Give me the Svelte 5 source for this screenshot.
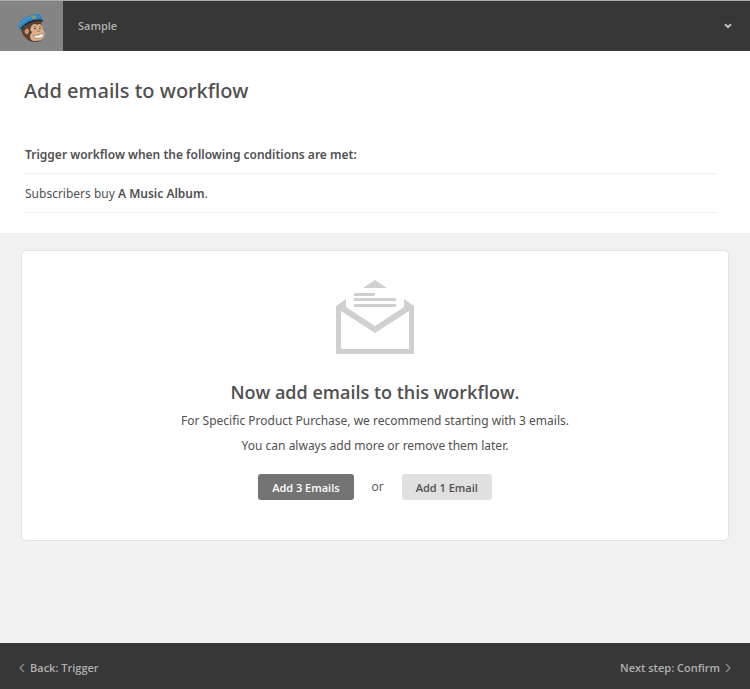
<script lang="ts">
  let { account = 'Sample', product = 'A Music Album', recommended = 3 } = $props();
</script>

<div class="page">
  <header class="topbar">
    <a class="logo" href="#home" aria-label="Home">
      <svg width="28" height="30" viewBox="0 0 28 30" aria-hidden="true">
        <path d="M3 15C3 19 5 23 8 25c2 3 6 4 9 4 5 0 8-2 8-7 1-2 0-5-1-7l-1-7-10-1z" fill="#59402f" />
        <path d="M13 14c1-3 4-4 6-2 2-2 4-1 5 1l1 4c2 2 2 4 1 7-2 3-5 4-9 4-3 0-5-2-5-5 0-2 2-3 2-4-2-1-2-3-1-5z" fill="#dcae8b" />
        <path d="M8 16c2-1 3 0 3 2s-1 4-3 3-2-4 0-5z" fill="#cb9472" />
        <path d="M15 22c4 1 7 0 10-2 1 3-1 5-4 5-3 1-5-1-6-3z" fill="#fff" stroke="#8b634b" stroke-width="0.600" />
        <path d="M16 14c0-1 1-1 2 0M21 14c1-1 2-1 2 0" stroke="#80533e" stroke-width="0.700" fill="none" />
        <circle cx="17" cy="15.500" r="0.800" fill="#382820" />
        <circle cx="22" cy="15.500" r="0.700" fill="#382820" />
        <path d="M19 18h3" stroke="#8b5d45" stroke-width="0.800" />
        <path d="M1 16C0 13 1 9 5 6c4-3 10-5 16-5 2 1 3 3 4 6-8 0-15 2-22 10z" fill="#2f86c2" />
        <path d="M2 12C5 7 11 4 18 3" stroke="#4999cb" stroke-width="1.500" fill="none" />
        <path d="M3 16C8 9 14 7 23 7M13 9c4-2 8-2 12-1" stroke="#20292f" stroke-width="1.500" fill="none" />
        <path d="M14 3l2-1 2 2-1 2-2 0z" fill="#a9944f" />
      </svg>
    </a>
    <span class="account">{account}</span>
    <button class="menu" aria-label="Open account menu">
      <svg width="8" height="6" viewBox="0 0 8 6" aria-hidden="true">
        <path d="M1 1.200l3 3 3-3" fill="none" stroke="currentColor" stroke-width="2" />
      </svg>
    </button>
  </header>

  <section class="intro">
    <h1>Add emails to workflow</h1>
    <div class="conditions">
      <h2>Trigger workflow when the following conditions are met:</h2>
      <p>Subscribers buy <strong>{product}</strong>.</p>
    </div>
  </section>

  <main>
    <div class="card">
      <svg class="envelope" width="80" height="74" viewBox="0 0 80 74" aria-hidden="true">
        <g fill="#d0d0d0">
          <path d="M28 8L40 0l12 8z" />
          <path d="M19 13h21v3H19zM19 18h42v3H19zM19 24h42v3H19z" />
          <path fill-rule="evenodd" d="M1 26l10-7v8l29 19 29-19v-8l10 7v48H1zM6 31v38h68V31L40 53z" />
        </g>
      </svg>
      <h3>Now add emails to this workflow.</h3>
      <p>For Specific Product Purchase, we recommend starting with {recommended} emails.</p>
      <p>You can always add more or remove them later.</p>
      <div class="actions">
        <button class="primary">Add {recommended} Emails</button>
        <span>or</span>
        <button class="secondary">Add 1 Email</button>
      </div>
    </div>
  </main>

  <footer>
    <a href="#trigger">
      <svg width="6" height="10" viewBox="0 0 6 10" aria-hidden="true">
        <path d="M5 1L1 5l4 4" fill="none" stroke="currentColor" stroke-width="1.500" />
      </svg>
      Back: Trigger
    </a>
    <a href="#confirm">
      Next step: Confirm
      <svg width="6" height="10" viewBox="0 0 6 10" aria-hidden="true">
        <path d="M1 1l4 4-4 4" fill="none" stroke="currentColor" stroke-width="1.500" />
      </svg>
    </a>
  </footer>
</div>

<style>
  .page {
    display: flex;
    flex-direction: column;
    min-height: 100vh;
    background: #f1f1f1;
    color: #505050;
    font-family: "Open Sans", sans-serif;
    font-size: 12px;
    line-height: 24px;
  }

  h1,
  h2,
  h3,
  p {
    margin: 0;
  }

  button {
    border: 0;
    font-family: inherit;
    cursor: pointer;
  }

  a {
    color: inherit;
    text-decoration: none;
  }

  .topbar {
    display: flex;
    align-items: center;
    box-sizing: border-box;
    height: 51px;
    border-top: 1px solid #a9aeab;
    background: #373737;
    color: #b0b0b0;
  }

  .logo {
    display: flex;
    align-items: center;
    justify-content: center;
    box-sizing: border-box;
    width: 63px;
    height: 100%;
    padding-top: 4px;
    background: #848484;
  }

  .account {
    flex: 1;
    padding-left: 15px;
    font-size: 11px;
    font-weight: 600;
  }

  .menu {
    display: flex;
    padding: 10px 18px;
    background: none;
    color: #c0c0c0;
  }

  .intro {
    padding: 24px 33px 20px 24px;
    background: #fff;
  }

  h1 {
    font-family: "Noto Sans", "Open Sans", sans-serif;
    font-size: 20px;
    font-weight: 500;
    line-height: 32px;
  }

  .conditions {
    padding: 28px 0 0 1px;
  }

  .conditions h2,
  .conditions p {
    padding: 8px 0 6px;
    border-bottom: 1px dotted #e4e4e4;
    line-height: 24px;
  }

  h2,
  p {
    font-family: "Noto Sans", "Open Sans", sans-serif;
    font-size: 12px;
  }

  h2,
  strong {
    font-weight: 600;
  }

  main {
    flex: 1;
    padding: 17px 21px;
  }

  .card {
    display: flex;
    flex-direction: column;
    align-items: center;
    padding: 29px 20px 40px;
    border: 1px solid #e2e2e2;
    border-radius: 5px;
    background: #fff;
    text-align: center;
  }

  .card p {
    line-height: 25px;
  }

  h3 {
    padding: 22px 0 0;
    font-size: 18px;
    font-weight: 600;
    line-height: 32px;
  }

  .actions {
    display: flex;
    align-items: center;
    gap: 18px;
    padding-top: 16px;
  }

  .actions button {
    height: 26px;
    padding: 0 14px;
    border-radius: 3px;
    font-size: 11px;
    font-weight: 600;
  }

  .actions .primary {
    background: #737373;
    color: #fff;
  }

  .actions .secondary {
    background: #e0e0e0;
    color: #505050;
  }

  footer {
    display: flex;
    align-items: center;
    justify-content: space-between;
    box-sizing: border-box;
    height: 46px;
    padding: 4px 19px 0;
    background: #373737;
    color: #b0b0b0;
    font-size: 11px;
    font-weight: 600;
  }

  footer a {
    display: flex;
    align-items: center;
    gap: 5px;
  }

  footer svg {
    color: #858585;
  }
</style>
